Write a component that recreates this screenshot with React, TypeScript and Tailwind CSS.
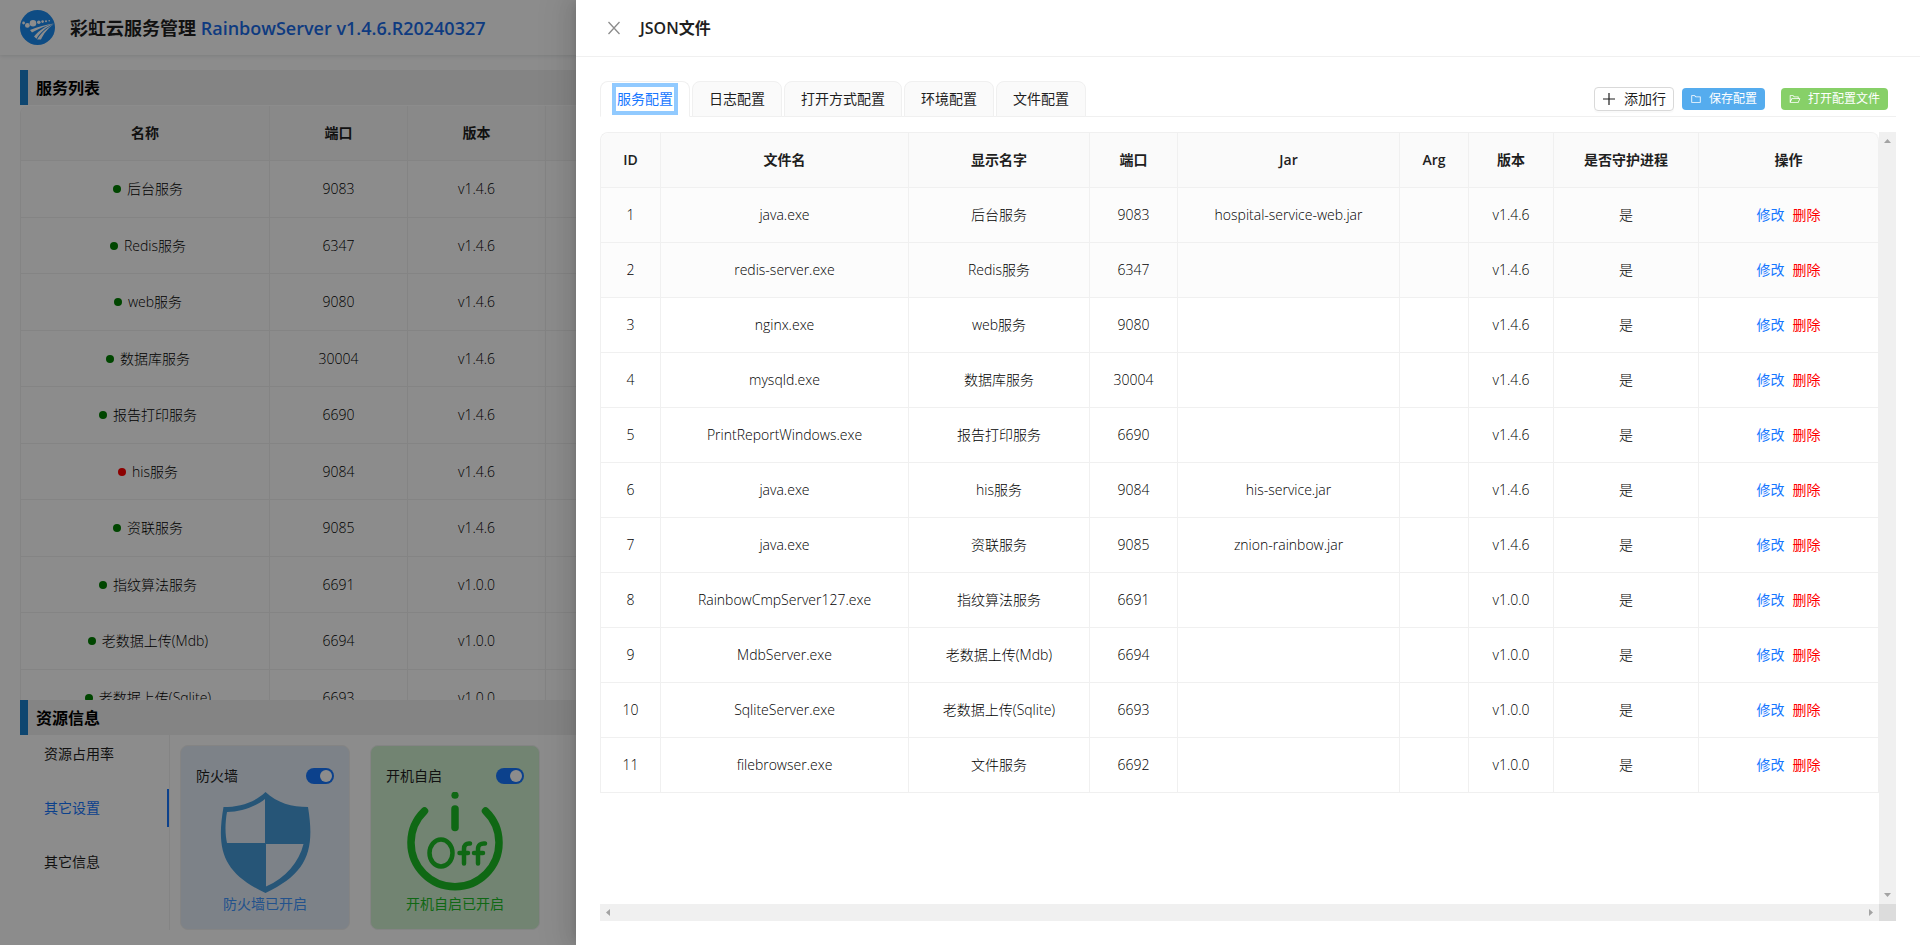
import React from 'react';

type Service = {
  id: number;
  file: string;
  name: string;
  port: string;
  jar: string;
  version: string;
  running: boolean;
};

const services: Service[] = [
  { id: 1, file: 'java.exe', name: '后台服务', port: '9083', jar: 'hospital-service-web.jar', version: 'v1.4.6', running: true },
  { id: 2, file: 'redis-server.exe', name: 'Redis服务', port: '6347', jar: '', version: 'v1.4.6', running: true },
  { id: 3, file: 'nginx.exe', name: 'web服务', port: '9080', jar: '', version: 'v1.4.6', running: true },
  { id: 4, file: 'mysqld.exe', name: '数据库服务', port: '30004', jar: '', version: 'v1.4.6', running: true },
  { id: 5, file: 'PrintReportWindows.exe', name: '报告打印服务', port: '6690', jar: '', version: 'v1.4.6', running: true },
  { id: 6, file: 'java.exe', name: 'his服务', port: '9084', jar: 'his-service.jar', version: 'v1.4.6', running: false },
  { id: 7, file: 'java.exe', name: '资联服务', port: '9085', jar: 'znion-rainbow.jar', version: 'v1.4.6', running: true },
  { id: 8, file: 'RainbowCmpServer127.exe', name: '指纹算法服务', port: '6691', jar: '', version: 'v1.0.0', running: true },
  { id: 9, file: 'MdbServer.exe', name: '老数据上传(Mdb)', port: '6694', jar: '', version: 'v1.0.0', running: true },
  { id: 10, file: 'SqliteServer.exe', name: '老数据上传(Sqlite)', port: '6693', jar: '', version: 'v1.0.0', running: true },
  { id: 11, file: 'filebrowser.exe', name: '文件服务', port: '6692', jar: '', version: 'v1.0.0', running: true },
];

const tabs = ['服务配置', '日志配置', '打开方式配置', '环境配置', '文件配置'];
const columns = ['ID', '文件名', '显示名字', '端口', 'Jar', 'Arg', '版本', '是否守护进程', '操作'];

function Logo() {
  return (
    <svg viewBox="0 0 35 35" className="size-[35px]" aria-hidden="true">
      <circle cx="17.5" cy="17.5" r="17.5" fill="#1a8af0" />
      <g fill="#fff">
        <circle cx="3.6" cy="13" r="1.4" />
        <circle cx="7.4" cy="15.4" r="2.4" />
        <circle cx="13" cy="13.3" r="3.3" />
        <circle cx="18.8" cy="12.2" r="1.8" />
        <circle cx="22.6" cy="11.6" r="1.3" />
        <circle cx="26" cy="11.2" r="1" />
        <circle cx="29.2" cy="10.8" r="0.8" />
        <path d="M10 20C18 17 26 14.5 34 13.500c-8 2-15 5-22 9z" />
        <path d="M34 13.600C26 16 20 19.500 14 26.500l2.500 2.200C20 22.500 26 17.500 34 13.600z" />
        <path d="M34 14C28 17 22 22 17 29.500h4C23.500 24 27.500 18.500 34 14z" />
      </g>
    </svg>
  );
}

function FolderIcon() {
  return (
    <svg viewBox="0 0 1024 1024" fill="currentColor" className="size-3" aria-hidden="true">
      <path d="M880 298.400H521L403.700 186.200a8.150 8.150 0 0 0-5.500-2.200H144c-17.700 0-32 14.300-32 32v592c0 17.700 14.300 32 32 32h736c17.700 0 32-14.300 32-32V330.400c0-17.700-14.300-32-32-32zM840 768H184V256h188.500l119.600 114.400H840V768z" />
    </svg>
  );
}

function FolderOpenIcon() {
  return (
    <svg viewBox="0 0 1024 1024" fill="currentColor" className="size-3" aria-hidden="true">
      <path d="M928 444H820V330.400c0-17.700-14.300-32-32-32H473L355.700 186.200a8.150 8.150 0 0 0-5.500-2.200H96c-17.700 0-32 14.300-32 32v592c0 17.700 14.300 32 32 32h698c13 0 24.800-7.900 29.700-20l134-332c1.500-3.800 2.300-7.900 2.300-12 0-17.700-14.300-32-32-32zM136 256h188.500l119.600 114.400H748V444H238c-13 0-24.800 7.900-29.700 20L136 643.200V256zm635.300 512H159l103.300-256h612.400L771.300 768z" />
    </svg>
  );
}

function PlusIcon() {
  return (
    <svg viewBox="0 0 14 14" fill="none" stroke="currentColor" className="size-3.5" aria-hidden="true">
      <path d="M7 1v12M1 7h12" strokeWidth="1.200" />
    </svg>
  );
}

function ShieldIcon() {
  return (
    <svg viewBox="0 0 92 102" className="h-[102px] w-[92px]" aria-hidden="true">
      <path
        fillRule="evenodd"
        fill="#459bd9"
        d="M46.500 0C35 11 20 15 4.500 15C-3 58 4 81 46.500 101C89 81 96 58 89 15C73 15 58 11 46.500 0z
          M46 7V51H8C6 42 6 31 8 20C22 20 36 15 46 7z
          M47 52H84.500C80 70 67 86 47 94.500z"
      />
    </svg>
  );
}

function PowerIcon() {
  return (
    <svg viewBox="0 1 96 100" className="h-[100px] w-[96px]" aria-hidden="true">
      <g fill="none" stroke="#1dbd25" strokeLinecap="round">
        <path d="M17.500 20A44 44 0 1 0 78.500 20" strokeWidth="7.500" />
        <path d="M48 18v18.500" strokeWidth="7.500" />
        <ellipse cx="34" cy="62" rx="11.500" ry="13.500" strokeWidth="4.500" />
        <path d="M57 72.500V58c0-4 2-6 6-5.500M52.500 62h8.500M71 72.500V58c0-4 3-6 7-5.500M67 62h9" strokeWidth="4.500" />
      </g>
      <circle cx="48" cy="4.200" r="3.600" fill="#1dbd25" />
    </svg>
  );
}

function SectionTitle({ children }: { children: React.ReactNode }) {
  return (
    <h2 className="flex h-[35px] shrink-0 items-center border-l-8 border-[#1a80cc] bg-[#f0f0f0] pl-2 text-base font-bold text-black">
      {children}
    </h2>
  );
}

function Switch({ label }: { label: string }) {
  return (
    <label className="flex items-center justify-between">
      {label}
      <input
        type="checkbox"
        defaultChecked
        className="h-4 w-7 appearance-none rounded-full bg-[#1677ff] before:mt-0.5 before:ml-3.5 before:block before:size-3 before:rounded-full before:bg-white"
      />
    </label>
  );
}

function ServerPage() {
  return (
    <div className="flex h-full flex-col overflow-hidden">
      <header className="flex h-[55px] shrink-0 items-center gap-[15px] px-5 shadow-[0_1px_4px_rgba(0,21,41,0.12)]">
        <Logo />
        <h1 className="text-lg font-bold">
          彩虹云服务管理 <span className="font-semibold text-[#1a6cea]">RainbowServer v1.4.6.R20240327</span>
        </h1>
      </header>

      <main className="flex min-h-0 flex-1 flex-col px-5 pt-[15px] pb-[15px]">
        <SectionTitle>服务列表</SectionTitle>
        <div className="min-h-0 flex-1 overflow-hidden pt-px">
          <table className="w-full table-fixed border-separate border-spacing-0 rounded-tl-lg border-l border-[#f0f0f0] text-center">
            <colgroup>
              <col className="w-[249px]" />
              <col className="w-[138px]" />
              <col className="w-[138px]" />
              <col />
            </colgroup>
            <thead>
              <tr className="h-[55px] bg-[#fafafa]">
                {['名称', '端口', '版本', ''].map((title, i) => (
                  <th key={i} className="border-r border-b border-[#f0f0f0] font-semibold first:rounded-tl-lg">
                    {title}
                  </th>
                ))}
              </tr>
            </thead>
            <tbody className="font-light text-black">
              {services.map((s) => (
                <tr key={s.id} className="odd:h-[57px] even:h-[56px]">
                  <td className="border-r border-b border-[#f0f0f0]">
                    <span
                      className={
                        s.running
                          ? 'mx-1.5 mb-px inline-block size-2 rounded-full bg-[#008000]'
                          : 'mx-1.5 mb-px inline-block size-2 rounded-full bg-[#ff0000]'
                      }
                    />
                    {s.name}
                  </td>
                  <td className="border-r border-b border-[#f0f0f0]">{s.port}</td>
                  <td className="border-r border-b border-[#f0f0f0]">{s.version}</td>
                  <td className="border-r border-b border-[#f0f0f0]" />
                </tr>
              ))}
            </tbody>
          </table>
        </div>

        <SectionTitle>资源信息</SectionTitle>
        <div className="flex h-[195px] shrink-0">
          <nav className="flex w-[150px] flex-col gap-4 border-r border-[#f0f0f0]">
            <button className="h-[38px] pl-6 text-left">资源占用率</button>
            <button className="h-[38px] border-r-2 border-[#1677ff] pl-6 text-left text-[#1677ff]">其它设置</button>
            <button className="h-[38px] pl-6 text-left">其它信息</button>
          </nav>
          <div className="flex gap-5 pt-2.5 pl-2.5">
            <section className="flex w-[170px] flex-col rounded-lg border border-[#f0f0f0] bg-[#e4edf8] px-[15px] pt-5">
              <Switch label="防火墙" />
              <div className="flex flex-col items-center pt-1.5 text-[#4096ff]">
                <ShieldIcon />
                <p>防火墙已开启</p>
              </div>
            </section>
            <section className="flex w-[170px] flex-col rounded-lg border border-[#f0f0f0] bg-[#cff0d0] px-[15px] pt-5">
              <Switch label="开机自启" />
              <div className="flex flex-col items-center gap-0.5 pt-1.5 text-[#1dbd25]">
                <PowerIcon />
                <p>开机自启已开启</p>
              </div>
            </section>
          </div>
        </div>
      </main>
    </div>
  );
}

function ConfigTable() {
  return (
    <table className="w-full table-fixed border-separate border-spacing-0 rounded-t-lg border-t border-l border-[#f0f0f0] text-center">
      <colgroup>
        <col className="w-[60px]" />
        <col />
        <col className="w-[181px]" />
        <col className="w-[88px]" />
        <col className="w-[222px]" />
        <col className="w-[69px]" />
        <col className="w-[85px]" />
        <col className="w-[145px]" />
        <col className="w-[180px]" />
      </colgroup>
      <thead>
        <tr className="h-[55px]">
          {columns.map((title) => (
            <th
              key={title}
              className="border-r border-b border-[#f0f0f0] bg-[#fafafa] font-semibold first:rounded-tl-lg last:rounded-tr-lg"
            >
              {title}
            </th>
          ))}
        </tr>
      </thead>
      <tbody className="font-light text-black">
        {services.map((s) => (
          <tr key={s.id} className={s.id <= 2 ? 'h-[55px] bg-[#fcfcfc]' : 'h-[55px]'}>
            {[s.id, s.file, s.name, s.port, s.jar, '', s.version, '是'].map((value, i) => (
              <td key={i} className="border-r border-b border-[#f0f0f0]">
                {value}
              </td>
            ))}
            <td className="border-r border-b border-[#f0f0f0] font-normal">
              <a href="#edit" className="mr-2 text-[#1677ff]">修改</a>
              <a href="#delete" className="text-[#ff0000]">删除</a>
            </td>
          </tr>
        ))}
      </tbody>
    </table>
  );
}

function ConfigDrawer() {
  return (
    <aside className="absolute inset-y-0 right-0 flex w-[70%] flex-col bg-white shadow-[-6px_0_16px_0_rgba(0,0,0,0.08),-3px_0_6px_-4px_rgba(0,0,0,0.12),-9px_0_28px_8px_rgba(0,0,0,0.05)]">
      <div className="flex h-[57px] shrink-0 items-center border-b border-[#f0f0f0] px-6">
        <button aria-label="关闭" className="mr-3 flex size-7 items-center justify-center text-[#8c8c8c]">
          <svg viewBox="0 0 14 14" fill="none" stroke="currentColor" className="size-3.5" aria-hidden="true">
            <path d="M1.500 1l11 12M12.500 1l-11 12" strokeWidth="1.300" />
          </svg>
        </button>
        <h2 className="text-base font-semibold">JSON文件</h2>
      </div>

      <div className="flex min-h-0 flex-1 flex-col p-6">
        <div className="flex items-center border-b border-[#f0f0f0]">
          <div className="-mb-px flex gap-0.5">
            {tabs.map((tab, i) => (
              <button
                key={tab}
                className={
                  i === 0
                    ? 'h-9 rounded-t-lg border border-[#f0f0f0] border-b-white bg-white px-[11px] text-[#1677ff]'
                    : 'h-9 rounded-t-lg border border-[#f0f0f0] bg-[#fafafa] px-4'
                }
              >
                {i === 0 ? <span className="block h-8 border-4 border-[#91caff] px-px leading-6">{tab}</span> : tab}
              </button>
            ))}
          </div>
          <div className="ml-auto flex items-center pr-2">
            <button className="mr-2 flex h-6 items-center gap-2 rounded border border-[#d9d9d9] px-[7px] shadow-[0_2px_0_rgba(0,0,0,0.02)]">
              <PlusIcon />
              添加行
            </button>
            <button className="mr-4 flex h-[22px] items-center gap-[7px] rounded bg-[#55acee] px-2 text-xs text-white">
              <FolderIcon />
              保存配置
            </button>
            <button className="flex h-[22px] items-center gap-[7px] rounded bg-[#87d068] px-2 text-xs text-white">
              <FolderOpenIcon />
              打开配置文件
            </button>
          </div>
        </div>

        <div className="mt-[15px] grid min-h-0 flex-1 grid-cols-[1fr_17px] grid-rows-[1fr_17px]">
          <div className="overflow-hidden">
            <ConfigTable />
          </div>
          <div className="flex flex-col items-center justify-between bg-[#f0f0f0] py-[7px]">
            <svg viewBox="0 0 7 4" className="h-1 w-[7px]" fill="#a3a3a3"><path d="M0 4L3.500 0L7 4z" /></svg>
            <svg viewBox="0 0 7 4" className="h-1 w-[7px]" fill="#a3a3a3"><path d="M0 0L3.500 4L7 0z" /></svg>
          </div>
          <div className="flex items-center justify-between bg-[#f0f0f0] px-1.5">
            <svg viewBox="0 0 4 7" className="h-[7px] w-1" fill="#a3a3a3"><path d="M4 0L0 3.500L4 7z" /></svg>
            <svg viewBox="0 0 4 7" className="h-[7px] w-1" fill="#a3a3a3"><path d="M0 0L4 3.500L0 7z" /></svg>
          </div>
          <div className="bg-[#dcdcdc]" />
        </div>
      </div>
    </aside>
  );
}

export default function App() {
  return (
    <div className="relative h-screen overflow-hidden bg-white font-['Open_Sans','Noto_Sans_CJK_SC',sans-serif] text-sm text-[#1f1f1f]">
      <ServerPage />
      <div className="absolute inset-0 bg-black/45" />
      <ConfigDrawer />
    </div>
  );
}
